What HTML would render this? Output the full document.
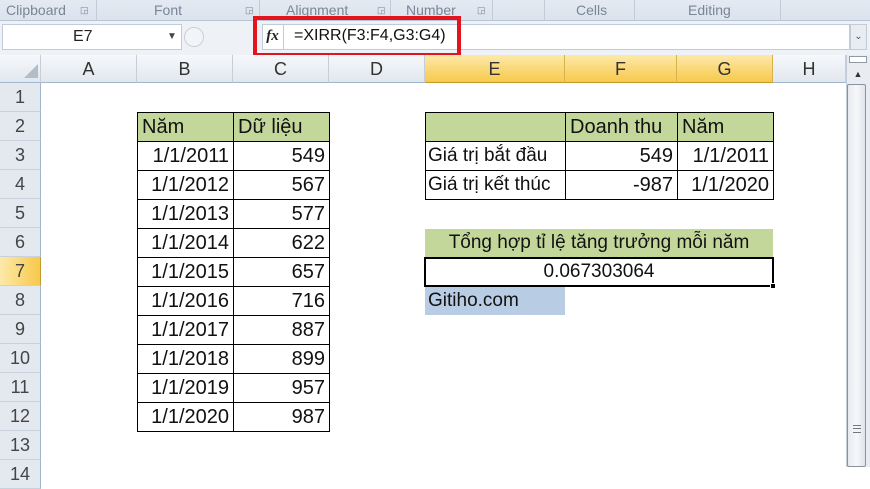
<!DOCTYPE html>
<html><head><meta charset="utf-8"><style>
*{margin:0;padding:0;box-sizing:border-box}
body{width:870px;height:467px;overflow:hidden;background:#fff;position:relative;font-family:"Liberation Sans","Noto Sans CJK SC",sans-serif;color:#222}
.a{position:absolute}
.rib{left:0;top:0;width:870px;height:21px;background:linear-gradient(#e4eaf2,#dbe3ee);border-bottom:1px solid #b9c5d4;font-size:14px;color:#7a8595}
.rib span{position:absolute;top:2px}
.sep{position:absolute;top:0;width:1px;height:20px;background:#c2ccd8}
.fb{left:0;top:21px;width:870px;height:34px;background:#eef2f7}
.hdr{top:55px;height:28px;background:linear-gradient(#f6f8fb,#e2e7ee);border-right:1px solid #c6ced9;border-bottom:1px solid #9eb6ce;font-size:18px;color:#333;text-align:center;line-height:28px}
.hs{background:linear-gradient(#fde9a8,#f7c94c);border-right:1px solid #d8b24a;border-bottom:1px solid #c39b2c}
.rh{left:0;width:41px;height:29px;background:#e4e9f0;border-bottom:1px solid #c9d1dc;border-right:1px solid #9eb6ce;font-size:18px;color:#444;text-align:center;line-height:29px}
.c{height:30px;border:1px solid #000;font-size:20px;line-height:28px;padding:0 4px;white-space:nowrap;overflow:hidden;color:#111}
.g{background:#c4d79b}
.r{text-align:right}
</style></head><body>
<div class="a rib">
<span style="left:6px">Clipboard</span><span style="left:80px;font-size:9px;top:5px">◲</span><div class="sep" style="left:96px"></div>
<span style="left:154px">Font</span><span style="left:245px;font-size:9px;top:5px">◲</span><div class="sep" style="left:259px"></div>
<span style="left:286px">Alignment</span><span style="left:377px;font-size:9px;top:5px">◲</span><div class="sep" style="left:390px"></div>
<span style="left:406px">Number</span><span style="left:477px;font-size:9px;top:5px">◲</span><div class="sep" style="left:492px"></div>
<div class="sep" style="left:544px"></div><span style="left:576px">Cells</span><div class="sep" style="left:634px"></div>
<span style="left:688px">Editing</span><div class="sep" style="left:780px"></div>
</div>
<div class="a fb"></div>
<div class="a" style="left:2px;top:24px;width:180px;height:26px;background:#fff;border:1px solid #c2ccd8;font-size:16px;line-height:24px;padding-left:70px">E7<span style="position:absolute;left:164px;top:0;font-size:10px;color:#444">▼</span></div>
<div class="a" style="left:184px;top:27px;width:20px;height:20px;border-radius:10px;border:1px solid #c9d0da;background:#f2f4f7"></div>
<div class="a" style="left:262px;top:24px;width:588px;height:26px;background:#fff;border:1px solid #c2ccd8"></div>
<div class="a" style="left:262px;top:24px;width:22px;height:26px;border-right:1px solid #c2ccd8;font-family:'Liberation Serif',serif;font-style:italic;font-weight:bold;font-size:15px;line-height:24px;text-align:center">fx</div>
<div class="a" style="left:294px;top:27px;font-size:16px;color:#111">=XIRR(F3:F4,G3:G4)</div>
<div class="a" style="left:850px;top:24px;width:17px;height:26px;background:#e9edf2;border:1px solid #c2ccd8;font-size:10px;text-align:center;line-height:24px;color:#555">⌄</div>
<div class="a" style="left:253px;top:16px;width:208px;height:41px;border:4px solid #e3141d"></div>

<div class="a hdr" style="left:0;width:41px"></div>
<svg class="a" style="left:24px;top:64px" width="14" height="14"><polygon points="14,0 14,14 0,14" fill="#b4bcc7"/></svg>
<div class="a hdr" style="left:41px;width:96px">A</div>
<div class="a hdr" style="left:137px;width:96px">B</div>
<div class="a hdr" style="left:233px;width:96px">C</div>
<div class="a hdr" style="left:329px;width:96px">D</div>
<div class="a hdr hs" style="left:425px;width:140px">E</div>
<div class="a hdr hs" style="left:565px;width:112px">F</div>
<div class="a hdr hs" style="left:677px;width:96px">G</div>
<div class="a hdr" style="left:773px;width:73px">H</div>

<div class="a rh" style="top:83px">1</div>
<div class="a rh" style="top:112px">2</div>
<div class="a rh" style="top:141px">3</div>
<div class="a rh" style="top:170px">4</div>
<div class="a rh" style="top:199px">5</div>
<div class="a rh" style="top:228px">6</div>
<div class="a rh" style="top:257px;background:linear-gradient(90deg,#fde9a8,#f7c94c);border-right:1px solid #c39b2c">7</div>
<div class="a rh" style="top:286px">8</div>
<div class="a rh" style="top:315px">9</div>
<div class="a rh" style="top:344px">10</div>
<div class="a rh" style="top:373px">11</div>
<div class="a rh" style="top:402px">12</div>
<div class="a rh" style="top:431px">13</div>
<div class="a rh" style="top:460px">14</div>

<div class="a c g" style="left:137px;top:112px;width:97px">Năm</div>
<div class="a c g" style="left:233px;top:112px;width:97px">Dữ liệu</div>
<div class="a c r" style="left:137px;top:141px;width:97px">1/1/2011</div><div class="a c r" style="left:233px;top:141px;width:97px">549</div>
<div class="a c r" style="left:137px;top:170px;width:97px">1/1/2012</div><div class="a c r" style="left:233px;top:170px;width:97px">567</div>
<div class="a c r" style="left:137px;top:199px;width:97px">1/1/2013</div><div class="a c r" style="left:233px;top:199px;width:97px">577</div>
<div class="a c r" style="left:137px;top:228px;width:97px">1/1/2014</div><div class="a c r" style="left:233px;top:228px;width:97px">622</div>
<div class="a c r" style="left:137px;top:257px;width:97px">1/1/2015</div><div class="a c r" style="left:233px;top:257px;width:97px">657</div>
<div class="a c r" style="left:137px;top:286px;width:97px">1/1/2016</div><div class="a c r" style="left:233px;top:286px;width:97px">716</div>
<div class="a c r" style="left:137px;top:315px;width:97px">1/1/2017</div><div class="a c r" style="left:233px;top:315px;width:97px">887</div>
<div class="a c r" style="left:137px;top:344px;width:97px">1/1/2018</div><div class="a c r" style="left:233px;top:344px;width:97px">899</div>
<div class="a c r" style="left:137px;top:373px;width:97px">1/1/2019</div><div class="a c r" style="left:233px;top:373px;width:97px">957</div>
<div class="a c r" style="left:137px;top:402px;width:97px">1/1/2020</div><div class="a c r" style="left:233px;top:402px;width:97px">987</div>

<div class="a c g" style="left:425px;top:112px;width:141px"></div>
<div class="a c g" style="left:565px;top:112px;width:113px">Doanh thu</div>
<div class="a c g" style="left:677px;top:112px;width:97px">Năm</div>
<div class="a c" style="left:425px;top:141px;width:141px;font-size:19px;padding:0 2px">Giá trị bắt đầu</div>
<div class="a c r" style="left:565px;top:141px;width:113px">549</div>
<div class="a c r" style="left:677px;top:141px;width:97px">1/1/2011</div>
<div class="a c" style="left:425px;top:170px;width:141px;font-size:19px;padding:0 2px">Giá trị kết thúc</div>
<div class="a c r" style="left:565px;top:170px;width:113px">-987</div>
<div class="a c r" style="left:677px;top:170px;width:97px">1/1/2020</div>

<div class="a g" style="left:425px;top:229px;width:348px;height:28px;font-size:19px;line-height:28px;text-align:center;color:#111">Tổng hợp tỉ lệ tăng trưởng mỗi năm</div>
<div class="a" style="left:424px;top:257px;width:350px;height:30px;border:2px solid #000;font-size:19px;line-height:26px;text-align:center;color:#111">0.067303064</div>
<div class="a" style="left:770px;top:283px;width:6px;height:6px;background:#000;border:1px solid #fff"></div>
<div class="a" style="left:425px;top:287px;width:140px;height:28px;background:#b8cce4;font-size:19px;line-height:28px;padding-left:3px;color:#111">Gitiho.com</div>

<div class="a" style="left:846px;top:55px;width:24px;height:412px;background:#e9edf2;border-left:1px solid #c2ccd8"></div>
<div class="a" style="left:849px;top:56px;width:18px;height:7px;border:1px solid #8f9aa8;background:#fff"></div>
<div class="a" style="left:849px;top:66px;width:18px;height:16px;font-size:9px;text-align:center;color:#333;line-height:16px">▲</div>
<div class="a" style="left:847px;top:84px;width:19px;height:383px;border:1px solid #8a929c;border-radius:2px;background:linear-gradient(90deg,#e6eaf0,#f6f7f9,#e0e5eb)"></div>
<div class="a" style="left:853px;top:425px;width:8px;height:8px;border-top:1px solid #777;border-bottom:1px solid #777"></div>
<div class="a" style="left:853px;top:428px;width:8px;height:2px;border-top:1px solid #777"></div>
</body></html>
